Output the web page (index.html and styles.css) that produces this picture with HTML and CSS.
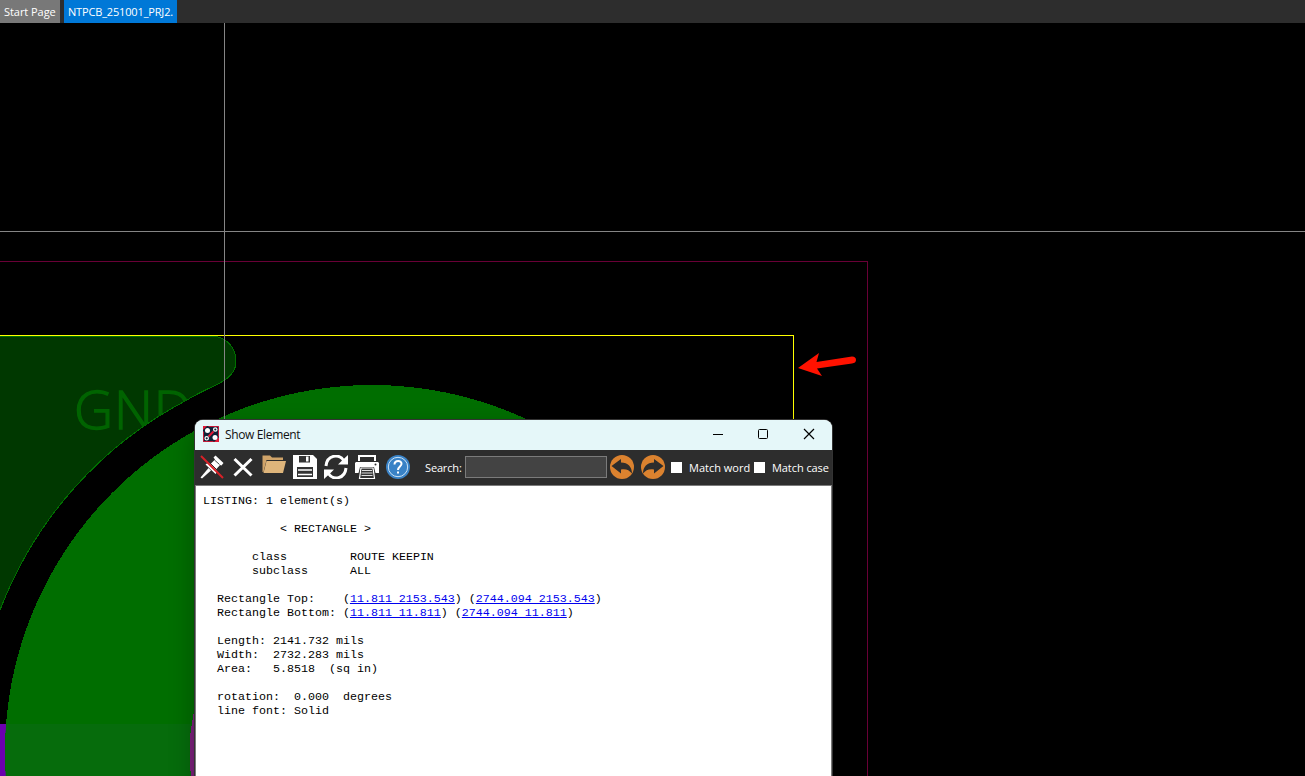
FILE: index.html
```
<!DOCTYPE html>
<html lang="en">
<head>
<meta charset="utf-8">
<title>NTPCB_251001_PRJ2</title>
<link rel="stylesheet" href="styles.css">
</head>
<body>
<div class="app">
  <nav class="tabs">
    <div class="tab tab-start"><span>Start Page</span></div>
    <div class="tab tab-active"><span>NTPCB_251001_PRJ2.</span></div>
  </nav>
  <main class="canvas">
    <svg class="board" width="1305" height="753" viewBox="0 23 1305 753">
      <defs>
        <clipPath id="pour"><path d="M0 336H214C228 338 236 349 236 361C236 372 229 378 220 383C208 389 198 393 187 400A397 397 0 0 0 0 610Z"/></clipPath>
        <clipPath id="pad"><circle cx="372" cy="752" r="367"/></clipPath>
      </defs>
      <g shape-rendering="crispEdges">
        <path d="M867.500 261V776M0 261.500H868" fill="none" stroke="#7b0040" opacity=".85"/>
        <rect y="724" width="30" height="52" fill="#6b00ae"/>
        <path d="M-5 336H214C228 338 236 349 236 361C236 372 229 378 220 383C208 389 198 393 187 400A397 397 0 0 0 0 610L-5 620Z" fill="#003800" stroke="#006f00"/>
      </g>
      <text class="net" x="74" y="429" textLength="118" clip-path="url(#pour)">GND</text>
      <g shape-rendering="crispEdges">
        <circle cx="372" cy="752" r="367" fill="#006e00"/>
        <rect y="724" width="400" height="52" fill="#066c0c" clip-path="url(#pad)"/>
        <circle cx="372" cy="752" r="182.500" fill="#7d207d"/>
        <path d="M0 335.500H793.500V776" fill="none" stroke="#ff0"/>
        <path d="M224.500 23V776M0 231.500H1305" fill="none" stroke="#858585"/>
      </g>
      <path d="M798 368L819 353L816.500 362L852 356.500Q856 356.500 856 360Q856 363 852 363.500L817 368.500L822 376Z" fill="#ff1200"/>
    </svg>
    <section class="dialog">
      <header class="titlebar">
        <svg class="logo" width="16" height="16" viewBox="0 0 16 16">
          <rect width="16" height="16" rx="1.500" fill="#102338"/>
          <path d="M.5 5.500V15.500H10.500M5.500 .5H15.500V10.500" fill="none" stroke="#c41836"/>
          <path d="M0 0H4L0 4ZM16 16H11L16 11Z" fill="#e31937"/>
          <path d="M5.500 10.500L10.500 5.500" stroke="#e31937" stroke-width="2"/>
          <circle cx="4.500" cy="4.500" r="2.500" fill="#fff"/><circle cx="12" cy="11.500" r="2.500" fill="#fff"/>
          <circle cx="12.300" cy="3.500" r="1.700" fill="none" stroke="#fff" stroke-width="1.200"/><circle cx="3.700" cy="12.300" r="1.700" fill="none" stroke="#fff" stroke-width="1.200"/>
        </svg>
        <h1 class="title">Show Element</h1>
        <svg class="controls" width="106" height="14" viewBox="0 0 106 14" fill="none" stroke="#000">
          <path d="M1 7.500H11"/><rect x="46.500" y="2.500" width="9" height="9" rx="1"/><path d="M92 2L102 12M102 2L92 12" stroke-width="1.200"/>
        </svg>
      </header>
      <div class="toolbar">
        <div class="icons">
          <svg width="24" height="24" viewBox="0 0 24 24"><path d="M8.500 13L11 15.500L2 23.500L.5 22.500Z" fill="#fff"/><path d="M15.500 .5L23.500 8L21.500 10.500L20 10L16 14.500Q17.500 17 15.500 19L5.500 9.500Q8 7.500 10.500 9L15 4.500L13.500 2.500Z" fill="#fff"/><path d="M14.500 5L19.500 9.500" stroke="#2d2d2d" stroke-width=".9"/><path d="M2 0L24 22" stroke="#2d2d2d" stroke-width="1"/><path d="M1 1L23 23" stroke="#d92128" stroke-width="2"/></svg>
          <svg width="24" height="24" viewBox="0 0 24 24"><path d="M3.500 4L20.500 20.500M20.500 4L3.500 20.500" stroke="#fff" stroke-width="3"/></svg>
          <svg width="24" height="24" viewBox="0 0 24 24"><path d="M.5 17V.5H8L10 2.500H21V5H4.500L1.500 17Z" fill="#cfa369"/><path d="M4.500 6H24L21 18H1.500Z" fill="#deb57b"/></svg>
          <svg width="24" height="24" viewBox="0 0 24 24"><path d="M0 0H20L24 4V24H0Z" fill="#fff"/><path d="M6 1H17V7.500H6ZM4 12H20V22H4Z" fill="#333"/><path d="M13 1.500H15.500V6.500H13Z" fill="#fff"/><path d="M5 15H19M5 19.500H19" stroke="#fff" stroke-width="1.300"/></svg>
          <svg width="24" height="24" viewBox="0 0 24 24"><path d="M2 11C3 0 15-2 20 6M22 13C21 24 9 26 4 18" fill="none" stroke="#fff" stroke-width="3"/><path d="M24 0V9.500H14L17.500 6ZM0 24V14.500H10L6.500 18Z" fill="#fff"/></svg>
          <svg width="24" height="24" viewBox="0 0 24 24"><path d="M3 0H21V6H19V2H5V6H3ZM1 7H23L24 8V18H20.500L19 12H5L3.500 18H0V8Z" fill="#fff"/><path d="M6 13H18L19.500 23.500H4.500Z" fill="#333" stroke="#fff" stroke-width="1.200"/><path d="M7 15.500H17M6.500 18H17.500M6.500 20.500H17.500" stroke="#ddd"/><circle cx="20.500" cy="9.500" r="1" fill="#2d2d2d"/></svg>
          <svg width="24" height="24" viewBox="0 0 24 24"><circle cx="12" cy="12" r="12" fill="#3982c6"/><circle cx="12" cy="12" r="9.700" fill="none" stroke="#cce3f5" stroke-width="1"/><path d="M8.500 9.500C8.500 4.500 16 5 15.500 9C15.200 11.500 12 11.500 12 15" fill="none" stroke="#fff" stroke-width="2"/><rect x="11" y="16.500" width="2" height="2" fill="#fff"/></svg>
        </div>
        <div class="divider"></div>
        <label class="search"><span class="lbl">Search:</span><span class="field"></span></label>
        <svg class="prev" width="24" height="24" viewBox="0 0 24 24"><circle cx="12" cy="12" r="12" fill="#db822f"/><path d="M1.500 11L11 4V7.500C18 7.500 22 12 22 18.500C19 15 16 13.500 11 14.500V18.500Z" fill="#2d2d2d"/></svg>
        <svg class="next" width="24" height="24" viewBox="0 0 24 24"><circle cx="12" cy="12" r="12" fill="#db822f"/><path d="M22.500 11L13 4V7.500C6 7.500 2 12 2 18.500C5 15 8 13.500 13 14.500V18.500Z" fill="#2d2d2d"/></svg>
        <label class="check"><span class="box"></span><span class="lbl">Match word</span></label>
        <label class="check"><span class="box"></span><span class="lbl">Match case</span></label>
      </div>
      <div class="listing">
        <div class="line">LISTING: 1 element(s)</div>
        <div class="line gap in11">&lt; RECTANGLE &gt;</div>
        <div class="line gap in7">class         ROUTE KEEPIN</div>
        <div class="line in7">subclass      ALL</div>
        <div class="line gap in2"><span>Rectangle Top:    (</span><a>11.811 2153.543</a><span>) (</span><a>2744.094 2153.543</a><span>)</span></div>
        <div class="line in2"><span>Rectangle Bottom: (</span><a>11.811 11.811</a><span>) (</span><a>2744.094 11.811</a><span>)</span></div>
        <div class="line gap in2">Length: 2141.732 mils</div>
        <div class="line in2">Width:  2732.283 mils</div>
        <div class="line in2">Area:   5.8518  (sq in)</div>
        <div class="line gap in2">rotation:  0.000  degrees</div>
        <div class="line in2">line font: Solid</div>
      </div>
    </section>
  </main>
</div>
</body>
</html>
```
FILE: styles.css
```
* { box-sizing: border-box; }
body { margin: 0; background: #000; overflow: hidden; font: 11px/16px "Open Sans", "Noto Sans", sans-serif; }
svg { display: block; flex: none; }
.app { width: 1305px; height: 776px; display: flex; flex-direction: column; overflow: hidden; }
.tabs { height: 23px; flex: none; display: flex; gap: 4px; background: #2d2d2d; color: #fff; }
.tab { height: 23px; padding: 4px 0 0 4px; white-space: nowrap; }
.tab-start { width: 60px; background: #787878; letter-spacing: -.05px; }
.tab-active { width: 113px; background: #0078d7; letter-spacing: -.16px; }
.canvas { position: relative; flex: 1; overflow: hidden; }
.net { font: 300 54px "Open Sans", "Noto Sans", sans-serif; fill: #006400; stroke: #006400; stroke-width: 1.3px; }
.dialog { position: absolute; left: 195px; top: 397px; width: 637px; height: 380px; border-radius: 8px 8px 0 0; background: #fff; box-shadow: 0 0 0 1px #333, 0 10px 26px rgba(0,0,0,.3); overflow: hidden; }
.titlebar { height: 30px; display: flex; align-items: center; padding: 0 14px 2px 8px; background: #e5f7f9; color: #111; }
.title { flex: 1; margin: 2px 0 0 6px; font-size: 12px; font-weight: 400; letter-spacing: -.36px; }
.toolbar { height: 35px; display: flex; align-items: center; padding: 0 0 1px 5px; background: #2d2d2d; color: #fff; }
.icons { display: flex; gap: 7px; }
.divider { width: 1px; height: 24px; margin-left: 6px; background: #222; }
.search { display: flex; align-items: center; margin-left: 9px; }
.search .lbl { width: 40px; letter-spacing: -.15px; }
.lbl { padding-top: 1px; }
.field { width: 142px; height: 22px; background: #434343; border: 1px solid #7b7b7b; }
.prev { margin-left: 3px; }
.next { margin-left: 7px; }
.check { display: flex; align-items: center; margin-left: 6px; white-space: nowrap; }
.check + .check { margin-left: 3px; }
.check .lbl { width: 62px; letter-spacing: 0; }
.check + .check .lbl { letter-spacing: -.07px; }
.box { width: 11px; height: 11px; margin-right: 7px; background: #fff; }
.listing { height: 315px; padding: 8px 0 0 7px; border: 1px solid #7b7b7b; border-bottom: 0; font: 11.665px/14px "Liberation Mono", monospace; color: #000; }
.line { height: 14px; display: flex; white-space: pre; }
.gap { margin-top: 14px; }
.in2 { padding-left: 14px; }
.in7 { padding-left: 49px; }
.in11 { padding-left: 77px; }
.listing a { color: #0000ee; text-decoration: underline; }
```
